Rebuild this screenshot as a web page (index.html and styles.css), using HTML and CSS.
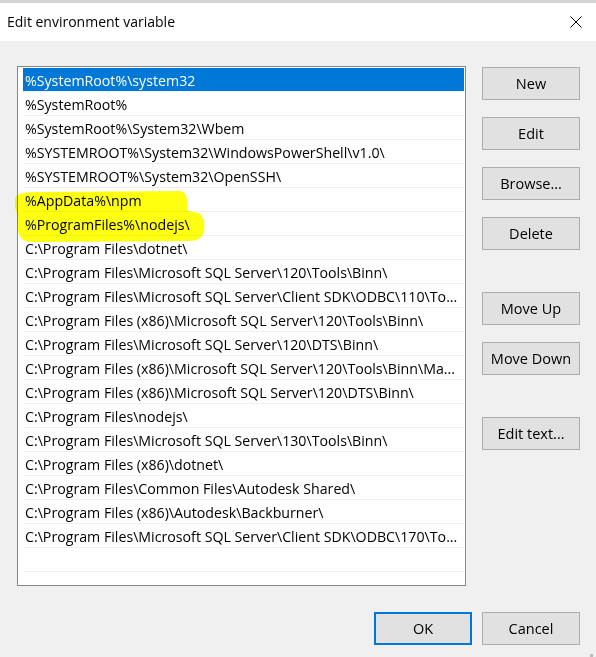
FILE: index.html
```html
<!DOCTYPE html>
<html>
<head>
<meta charset="utf-8">
<link rel="stylesheet" href="styles.css">
</head>
<body>
<div class="window">
  <div class="titlebar">
    <span class="title">Edit environment variable</span>
    <svg class="close" width="12" height="12" viewBox="0 0 12 12"><path d="M0.5 0.5 L11.5 11.5 M11.5 0.5 L0.5 11.5" stroke="#000" stroke-width="1" fill="none"/></svg>
  </div>
  <div class="content">
    <div class="main">
      <div class="list">
        <div class="row selected"><span>%SystemRoot%\system32</span></div>
        <div class="row"><span>%SystemRoot%</span></div>
        <div class="row"><span>%SystemRoot%\System32\Wbem</span></div>
        <div class="row"><span>%SYSTEMROOT%\System32\WindowsPowerShell\v1.0\</span></div>
        <div class="row"><span>%SYSTEMROOT%\System32\OpenSSH\</span></div>
        <div class="row"><span>%AppData%\npm</span></div>
        <div class="row"><span>%ProgramFiles%\nodejs\</span></div>
        <div class="row"><span>C:\Program Files\dotnet\</span></div>
        <div class="row"><span>C:\Program Files\Microsoft SQL Server\120\Tools\Binn\</span></div>
        <div class="row"><span>C:\Program Files\Microsoft SQL Server\Client SDK\ODBC\110\To...</span></div>
        <div class="row"><span>C:\Program Files (x86)\Microsoft SQL Server\120\Tools\Binn\</span></div>
        <div class="row"><span>C:\Program Files\Microsoft SQL Server\120\DTS\Binn\</span></div>
        <div class="row"><span>C:\Program Files (x86)\Microsoft SQL Server\120\Tools\Binn\Ma...</span></div>
        <div class="row"><span>C:\Program Files (x86)\Microsoft SQL Server\120\DTS\Binn\</span></div>
        <div class="row"><span>C:\Program Files\nodejs\</span></div>
        <div class="row"><span>C:\Program Files\Microsoft SQL Server\130\Tools\Binn\</span></div>
        <div class="row"><span>C:\Program Files (x86)\dotnet\</span></div>
        <div class="row"><span>C:\Program Files\Common Files\Autodesk Shared\</span></div>
        <div class="row"><span>C:\Program Files (x86)\Autodesk\Backburner\</span></div>
        <div class="row"><span>C:\Program Files\Microsoft SQL Server\Client SDK\ODBC\170\To...</span></div>
        <div class="row"><span></span></div>
        <svg class="marker" width="200" height="60" viewBox="0 0 200 60"><path d="M0,8 Q1,1 20,1 L165,0 Q172,1 172,10 L173,20 L184,22 Q191,28 189,40 Q187,50 174,50 L16,51 Q4,50 3,40 L2,22 Q-1,16 0,8 Z" fill="#ffff10"/></svg>
      </div>
      <div class="buttons">
        <button class="btn">New</button>
        <button class="btn">Edit</button>
        <button class="btn">Browse...</button>
        <button class="btn">Delete</button>
        <button class="btn gap-lg">Move Up</button>
        <button class="btn">Move Down</button>
        <button class="btn gap-xl">Edit text...</button>
      </div>
    </div>
    <div class="footer">
      <button class="btn default">OK</button>
      <button class="btn">Cancel</button>
    </div>
  </div>
  <div class="grip"></div>
</div>
</body>
</html>
```

FILE: styles.css
```css
* { box-sizing: border-box; }
html, body {
  margin: 0;
  padding: 0;
  background: #f0f0f0;
}
body {
  font-family: "Open Sans", "Noto Sans", sans-serif;
  font-size: 14.5px;
  color: #000;
  width: 596px;
  height: 657px;
  overflow: hidden;
}
.window {
  position: relative;
  height: 657px;
}
.titlebar {
  height: 41px;
  background: #fff;
  border-top: 3px solid #d4d4d4;
  display: flex;
  align-items: center;
  justify-content: space-between;
  padding: 0 14px 0 7px;
}
.title {
  font-size: 14px;
  margin-top: -1px;
}
.close { display: block; margin-top: -1px; }
.content {
  padding: 25px 16px 0 17px;
}
.main {
  display: flex;
  gap: 16px;
}
.list {
  position: relative;
  width: 449px;
  height: 520px;
  background: #fff;
  border: 1px solid #828790;
  padding: 1px 1px 0 5px;
  overflow: visible;
}
.row {
  height: 24px;
  border-bottom: 1px solid #f0f0f0;
  padding-left: 2px;
  display: flex;
  align-items: center;
  white-space: nowrap;
  overflow: hidden;
  position: relative;
  z-index: 0;
  font-size: 14.2px;
}
.row span { line-height: 23px; padding-top: 1px; }
.row.selected {
  background: #0078d7;
  color: #fff;
}
.marker {
  position: absolute;
  left: -3px;
  top: 124px;
  mix-blend-mode: multiply;
  z-index: 1;
  pointer-events: none;
}
.buttons {
  display: flex;
  flex-direction: column;
  padding-top: 1px;
  gap: 17px;
}
.btn {
  width: 98px;
  height: 33px;
  background: #e1e1e1;
  border: 1px solid #adadad;
  font-family: inherit;
  font-size: 14.5px;
  color: #000;
  padding: 0;
  margin: 0;
}
.gap-lg { margin-top: 25px; }
.gap-xl { margin-top: 25px; }
.footer {
  display: flex;
  justify-content: flex-end;
  gap: 10px;
  margin-top: 26px;
  padding-right: 0;
}
.btn.default {
  border: 2px solid #0078d7;
}
.grip {
  position: absolute;
  right: 3px;
  bottom: 0;
  width: 3px;
  height: 3px;
  background: #bcbcbc;
}
```
